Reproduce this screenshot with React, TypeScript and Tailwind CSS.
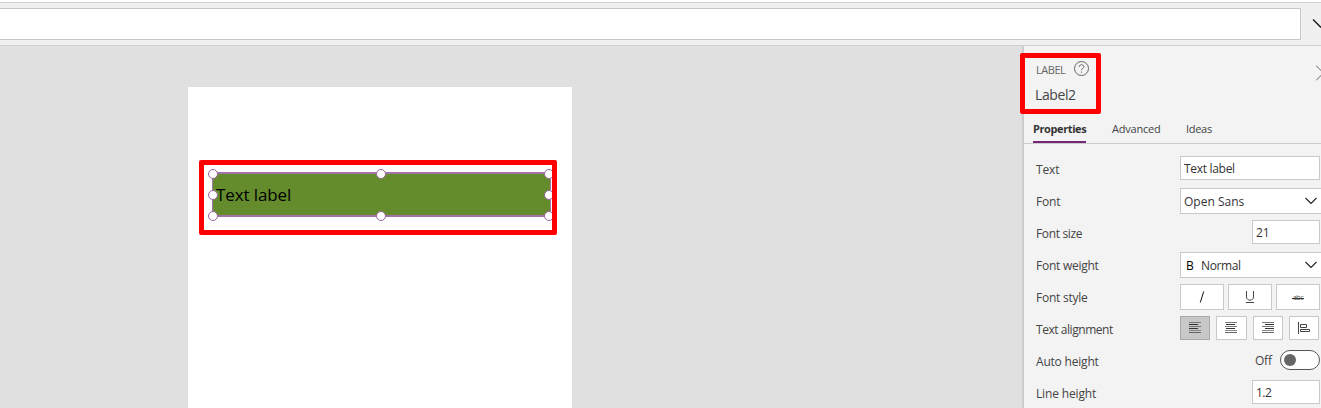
import React from "react";

function Chevron({ className }: { className?: string }) {
  return (
    <svg width="14" height="8" viewBox="0 0 14 8" fill="none" stroke="#222" strokeWidth="1.1" className={className}>
      <path d="M1.5 1 L7 6.5 L12.5 1" />
    </svg>
  );
}

function Row({ label, track, children }: { label: string; track?: string; children: React.ReactNode }) {
  return (
    <div className="flex h-8 items-start justify-between pl-3 pt-1">
      <span className={`mt-[5px] text-[12px] leading-[18px] whitespace-nowrap text-[#444] ${track ?? "tracking-[-0.15px]"}`}>{label}</span>
      <div className="flex shrink-0">{children}</div>
    </div>
  );
}

const field = "box-border h-6 border border-[#c8c8c8] bg-white px-[3px] text-[12px] leading-[23px] whitespace-nowrap text-[#333]";
const select = "box-border flex h-[26px] w-[141px] items-center border border-r-0 border-[#c8c8c8] bg-white pl-[3px] text-[12px] whitespace-nowrap text-[#333]";
const styleBtn = "box-border flex h-[26px] w-11 items-center justify-center border border-[#c8c8c8] bg-white";
const alignBtn = "box-border flex h-6 items-center justify-center border border-[#c8c8c8] bg-white";

const handles = [
  "left-[-6px] top-[-5px]", "left-[162px] top-[-5px]", "left-[330px] top-[-5px]",
  "left-[-6px] top-[16px]", "left-[330px] top-[16px]",
  "left-[-6px] top-[37px]", "left-[162px] top-[37px]", "left-[330px] top-[37px]",
];

const lines = [
  { w: 12, c: "#777" },
  { w: 9, c: "#333" },
  { w: 12, c: "#777" },
  { w: 9, c: "#333" },
  { w: 12, c: "#888" },
  { w: 12, c: "#666" },
];

function Lines({ align }: { align: "l" | "c" | "r" }) {
  return (
    <svg width="12" height="12" viewBox="0 0 12 12" shapeRendering="crispEdges">
      {lines.map(({ w, c }, i) => (
        <rect key={i} x={align === "l" ? 0 : align === "c" ? Math.floor((12 - w) / 2) : 12 - w} y={i * 2} width={w} height="1" fill={c} />
      ))}
    </svg>
  );
}

export default function App() {
  return (
    <div className="flex h-[408px] w-[1321px] flex-col overflow-hidden bg-white pt-[2px] font-['Open_Sans','Noto_Sans',sans-serif]">
      <div className="flex h-11 shrink-0 items-start border-y border-[#d0d0d0] bg-[#f0f0f0] pt-[5px]">
        <div className="h-8 w-[1301px] border border-l-0 border-[#c8c8c8] bg-white" />
        <svg width="20" height="32" viewBox="0 0 20 32" fill="none" stroke="#111" strokeWidth="1.3"><path d="M12 11.5 L20 19.5" /></svg>
      </div>
      <div className="flex min-h-0 flex-1">
        <div className="w-[1022px] shrink-0 bg-[#e0e0e0] pt-[41px] pl-[188px]">
          <div className="h-[321px] w-[384px] bg-white pt-[73px] pl-[11px]">
            <div className="relative h-[75px] w-[358px] pt-3 pl-[13px]">
              <div className="relative flex h-[45px] w-[339px] items-center border border-y-2 border-[#a274a8] bg-[#648c2d] pl-[3px]">
                <span className="text-[17px] leading-none tracking-[-0.1px] text-black">Text label</span>
                {handles.map((h) => (
                  <span key={h} className={`absolute ml-px size-[10px] rounded-full border-[1.5px] border-[#9a639f] bg-white ${h}`} />
                ))}
              </div>
              <div className="absolute inset-0 rounded-[2px] border-[5px] border-[#ff0000]" />
            </div>
          </div>
        </div>
        <div className="relative w-[299px] shrink-0 border-l-2 border-[#ccc] bg-[#f3f3f3]">
          <div className="flex h-[98px] flex-col">
            <div className="flex h-[67px] flex-col pt-[15px] pl-3">
              <div className="flex h-4 items-center justify-between">
                <div className="flex items-center gap-[8px]">
                  <span className="mt-[3px] text-[11px] tracking-[-0.45px] text-[#666]">LABEL</span>
                  <svg width="16" height="16" viewBox="0 0 16 16" fill="none" stroke="#666"><circle cx="8.5" cy="7.5" r="7" /><path d="M6.3 5.9 C6.3 3 10.8 3.1 10.8 5.7 C10.8 7.4 8.5 7.4 8.5 9.2 M8.5 10.5 V11.7" /></svg>
                </div>
                <svg width="5" height="16" viewBox="0 0 5 16" fill="none" stroke="#666" className="mt-2"><path d="M0 .5 L7.5 8 L0 15.5" /></svg>
              </div>
              <span className="mt-[8px] -ml-px text-[14px] leading-5 tracking-[-0.4px] text-[#444]">Label2</span>
            </div>
            <div className="flex h-[31px] items-start border-b border-[#ccc] pl-[9px] text-[11px] leading-4 text-[#444]">
              <span className="mt-[8px] h-[22px] w-[53px] border-b-2 border-[#742774] text-[11px] font-bold tracking-[-0.4px] whitespace-nowrap text-[#333]">Properties</span>
              <span className="mt-2 ml-[26px] w-[74px] tracking-[-0.2px]">Advanced</span>
              <span className="mt-2 tracking-[-0.3px]">Ideas</span>
            </div>
          </div>
          <div className="flex flex-col pt-2">
            <Row label="Text"><div className={`${field} mr-px w-[140px]`}><span className="block translate-y-px leading-[22px] tracking-[-0.3px]">Text label</span></div></Row>
            <Row label="Font"><div className={`${select} tracking-[0px]`}><span className="mt-px flex-1">Open Sans</span><Chevron className="mr-[3px]" /></div></Row>
            <Row label="Font size" track="tracking-[-0.35px]"><div className={`${field} mr-px w-[68px]`}>21</div></Row>
            <Row label="Font weight" track="tracking-[-0.25px]"><div className={`${select} tracking-[-0.4px]`}><span className="mt-px w-[17px] pl-[2px] font-medium text-black">B</span><span className="mt-px flex-1">Normal</span><Chevron className="mr-[3px]" /></div></Row>
            <Row label="Font style" track="tracking-[-0.25px]">
              <div className="mr-px flex gap-1">
                <div className={styleBtn}><svg width="6" height="12" viewBox="0 0 6 12" stroke="#111"><path d="M1.3 11.5 L4.7 .5" /></svg></div>
                <div className={styleBtn}><svg width="10" height="12" viewBox="0 0 10 12" fill="none" stroke="#444"><path d="M1.5 0 V6 C1.5 10.2 8.5 10.2 8.5 6 V0 M1 11.5 H9" /></svg></div>
                <div className={styleBtn}><span className="relative text-[7px] leading-none tracking-[-0.5px] text-[#555]">abc<span className="absolute top-[4px] -left-px h-px w-3 bg-[#333]" /></span></div>
              </div>
            </Row>
            <Row label="Text alignment" track="tracking-[-0.45px]">
              <div className="mr-[2px] flex gap-[6px]">
                <div className="box-border flex h-6 w-[30px] items-center justify-center border border-[#aaa] bg-[#c8c8c8]"><Lines align="l" /></div>
                <div className={`${alignBtn} w-[31px] pr-px`}><Lines align="c" /></div>
                <div className={`${alignBtn} w-[30px]`}><Lines align="r" /></div>
                <div className={`${alignBtn} w-[30px]`}><svg width="12" height="12" viewBox="0 0 12 12" fill="none" stroke="#444"><path d="M.5 0 V12 M2.5 2.5 H8.5 V5.5 H2.5 Z M2.5 7.5 H11.5 V9.5 H2.5 Z" /></svg></div>
              </div>
            </Row>
            <Row label="Auto height" track="tracking-[-0.2px]">
              <div className="mt-[2px] mr-px flex h-5 items-center">
                <span className="mt-px mr-[8px] text-[12px] tracking-[-0.1px] text-[#444]">Off</span>
                <div className="flex h-5 w-10 items-center rounded-full border border-[#555] bg-white pl-[3px]"><span className="size-3 rounded-full bg-[#666]" /></div>
              </div>
            </Row>
            <Row label="Line height" track="tracking-[-0.15px]"><div className={`${field} mr-px w-[68px] tracking-[-0.5px]`}>1.2</div></Row>
          </div>
          <div className="absolute top-[7px] left-[-4px] h-[61px] w-[81px] rounded-[2px] border-[5px] border-[#ff0000]" />
        </div>
      </div>
    </div>
  );
}
